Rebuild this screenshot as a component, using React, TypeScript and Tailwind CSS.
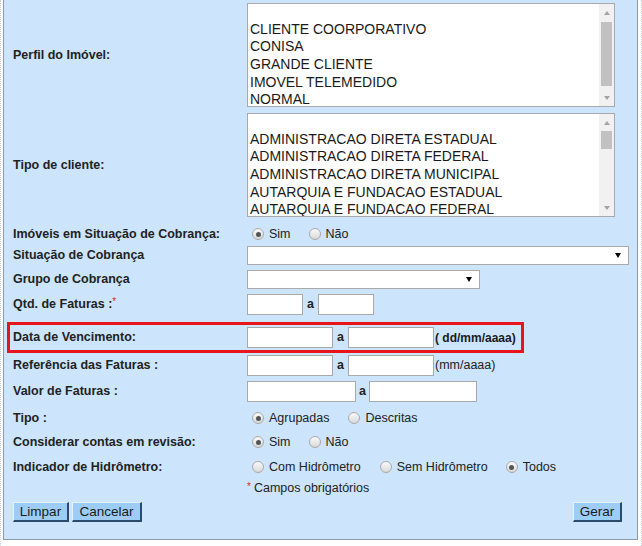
import React from "react";

const FONT = "font-['Liberation_Sans',Arial,Helvetica,sans-serif]";

function Radio({ checked }: { checked?: boolean }) {
  return (
    <span className="w-[12px] h-[12px] rounded-full border border-[#a9a9a9] bg-[linear-gradient(#fafafa,#d9d9d9)] flex items-center justify-center shrink-0">
      {checked && <span className="w-[5px] h-[5px] rounded-full bg-[#555]" />}
    </span>
  );
}

function RadioGroup({ items }: { items: { label: string; checked?: boolean; mr?: string }[] }) {
  return (
    <div className="flex items-center">
      {items.map((it, i) => (
        <span key={i} className={"flex items-center " + (it.mr ?? "")}>
          <span className="ml-[5px]">
            <Radio checked={it.checked} />
          </span>
          <span className="ml-[5px] text-[12.5px] text-[#222] leading-none">{it.label}</span>
        </span>
      ))}
    </div>
  );
}

function Label({ children }: { children: React.ReactNode }) {
  return <div className="w-[234px] shrink-0 font-bold text-[12.5px] text-[#222] leading-none">{children}</div>;
}

function Input({ w }: { w: string }) {
  return <div className={"h-[21px] bg-white border border-[#a9a9a9] shrink-0 " + w} />;
}

function A() {
  return <span className="font-bold text-[12.5px] text-[#222] w-[15px] text-center leading-none shrink-0">a</span>;
}

function Select({ w }: { w: string }) {
  return (
    <div className={"h-[19px] bg-white border border-[#a9a9a9] flex items-center justify-end pr-[7px] " + w}>
      <span className="w-0 h-0 border-l-[3px] border-r-[3px] border-t-[5px] border-l-transparent border-r-transparent border-t-black" />
    </div>
  );
}

function ListBox({ lines, thumbTop, thumbH }: { lines: string[]; thumbTop: string; thumbH: string }) {
  return (
    <div className="w-[368px] h-[104px] bg-white border border-[#a9a9a9] flex overflow-hidden">
      <div className="flex-1 overflow-hidden pl-[2px]">
        <div className="-mt-[1px]">
          {lines.map((l, i) => (
            <div key={i} className="h-[17.7px] leading-[17.7px] text-[14px] text-[#1a1a1a] whitespace-nowrap">
              {l}
            </div>
          ))}
        </div>
      </div>
      <div className="w-[15px] bg-[#f1f1f1] flex flex-col">
        <div className="h-[17px] flex items-center justify-center">
          <span className="w-0 h-0 border-l-[3.5px] border-r-[3.5px] border-b-[4px] border-l-transparent border-r-transparent border-b-[#a3a3a3]" />
        </div>
        <div className="flex-1 flex flex-col items-center">
          <div className={"w-[11px] bg-[#c1c1c1] " + thumbTop + " " + thumbH} />
        </div>
        <div className="h-[17px] flex items-center justify-center">
          <span className="w-0 h-0 border-l-[3.5px] border-r-[3.5px] border-t-[4px] border-l-transparent border-r-transparent border-t-[#a3a3a3]" />
        </div>
      </div>
    </div>
  );
}

function Button({ children, w }: { children: React.ReactNode; w: string }) {
  return (
    <div
      className={
        "h-[20px] bg-[#9dcdf7] border-t border-l border-t-[#e4f1fd] border-l-[#e4f1fd] border-b-2 border-r-2 border-b-[#2c4b6c] border-r-[#2c4b6c] flex items-center justify-center text-[13.5px] text-[#1a1a1a] leading-none " +
        w
      }
    >
      {children}
    </div>
  );
}

export default function App() {
  return (
    <div className={"w-[642px] h-[546px] bg-white relative overflow-hidden " + FONT}>
      <div className="flex h-full">
        <div className="w-[3px] shrink-0 border-l border-dotted border-[#c5ced8]" />
        <div className="w-[635px] h-[540px] shrink-0 bg-[#cce5fc] border-l border-r border-b border-[#8c99a6] pt-[3px]">
          {/* Perfil */}
          <div className="flex items-center pl-[9px]">
            <Label>Perfil do Imóvel:</Label>
            <ListBox
              lines={["", "CLIENTE COORPORATIVO", "CONISA", "GRANDE CLIENTE", "IMOVEL TELEMEDIDO", "NORMAL"]}
              thumbTop="mt-[1px]"
              thumbH="h-[64px]"
            />
          </div>
          {/* Tipo de cliente */}
          <div className="flex items-center pl-[9px] mt-[6px]">
            <Label>Tipo de cliente:</Label>
            <ListBox
              lines={[
                "",
                "ADMINISTRACAO DIRETA ESTADUAL",
                "ADMINISTRACAO DIRETA FEDERAL",
                "ADMINISTRACAO DIRETA MUNICIPAL",
                "AUTARQUIA E FUNDACAO ESTADUAL",
                "AUTARQUIA E FUNDACAO FEDERAL",
              ]}
              thumbTop="mt-0"
              thumbH="h-[18px]"
            />
          </div>
          {/* Imóveis em Situação */}
          <div className="flex items-center pl-[9px] mt-[7px] h-[20px]">
            <Label>Imóveis em Situação de Cobrança:</Label>
            <RadioGroup items={[{ label: "Sim", checked: true, mr: "mr-[13px]" }, { label: "Não" }]} />
          </div>
          {/* Situação de Cobrança */}
          <div className="flex items-center pl-[9px] mt-[2px] h-[19px]">
            <Label>Situação de Cobrança</Label>
            <Select w="w-[382px]" />
          </div>
          {/* Grupo */}
          <div className="flex items-center pl-[9px] mt-[5px] h-[19px]">
            <Label>Grupo de Cobrança</Label>
            <Select w="w-[233px]" />
          </div>
          {/* Qtd */}
          <div className="flex items-center pl-[9px] mt-[5px] h-[21px]">
            <Label>
              Qtd. de Faturas :<span className="text-[#e0262b] font-normal text-[10px] relative -top-[3px]">*</span>
            </Label>
            <Input w="w-[56px]" />
            <A />
            <Input w="w-[56px]" />
          </div>
          {/* Data de Vencimento (highlighted) */}
          <div className="ml-[3px] mt-[7px] w-[517px] h-[31px] border-[3px] border-[#e8141c] flex items-center pl-[3px]">
            <Label>Data de Vencimento:</Label>
            <Input w="w-[86px]" />
            <A />
            <Input w="w-[86px]" />
            <span className="font-bold text-[12px] text-[#1a1a1a] leading-none ml-[1px]">( dd/mm/aaaa)</span>
          </div>
          {/* Referência */}
          <div className="flex items-center pl-[9px] mt-[2px] h-[21px]">
            <Label>Referência das Faturas :</Label>
            <Input w="w-[86px]" />
            <A />
            <Input w="w-[86px]" />
            <span className="text-[12.5px] text-[#222] leading-none ml-[1px]">(mm/aaaa)</span>
          </div>
          {/* Valor */}
          <div className="flex items-center pl-[9px] mt-[5px] h-[21px]">
            <Label>Valor de Faturas :</Label>
            <Input w="w-[109px]" />
            <span className="font-bold text-[12.5px] text-[#222] w-[13px] text-center leading-none">a</span>
            <Input w="w-[108px]" />
          </div>
          {/* Tipo */}
          <div className="flex items-center pl-[9px] mt-[6px] h-[20px]">
            <Label>Tipo :</Label>
            <RadioGroup items={[{ label: "Agrupadas", checked: true, mr: "mr-[14px]" }, { label: "Descritas" }]} />
          </div>
          {/* Considerar */}
          <div className="flex items-center pl-[9px] mt-[4px] h-[20px]">
            <Label>Considerar contas em revisão:</Label>
            <RadioGroup items={[{ label: "Sim", checked: true, mr: "mr-[13px]" }, { label: "Não" }]} />
          </div>
          {/* Indicador */}
          <div className="flex items-center pl-[9px] mt-[5px] h-[20px]">
            <Label>Indicador de Hidrômetro:</Label>
            <RadioGroup
              items={[
                { label: "Com Hidrômetro", mr: "mr-[14px]" },
                { label: "Sem Hidrômetro", mr: "mr-[13px]" },
                { label: "Todos", checked: true },
              ]}
            />
          </div>
          {/* Campos obrigatórios */}
          <div className="flex items-center pl-[9px] mt-[1px] h-[20px]">
            <div className="w-[234px] shrink-0" />
            <span className="text-[12.5px] text-[#222] leading-none">
              <span className="text-[#e0262b] text-[10px] relative -top-[2px] mr-[3px]">*</span>Campos obrigatórios
            </span>
          </div>
          {/* Buttons */}
          <div className="flex items-center mt-[4px] pl-[9px] pr-[15px]">
            <Button w="w-[56px]">Limpar</Button>
            <Button w="w-[70px] ml-[3px]">Cancelar</Button>
            <div className="flex-1" />
            <Button w="w-[49px]">Gerar</Button>
          </div>
        </div>
        <div className="flex-1 border-r border-dotted border-[#c5ced8]" />
      </div>
    </div>
  );
}
